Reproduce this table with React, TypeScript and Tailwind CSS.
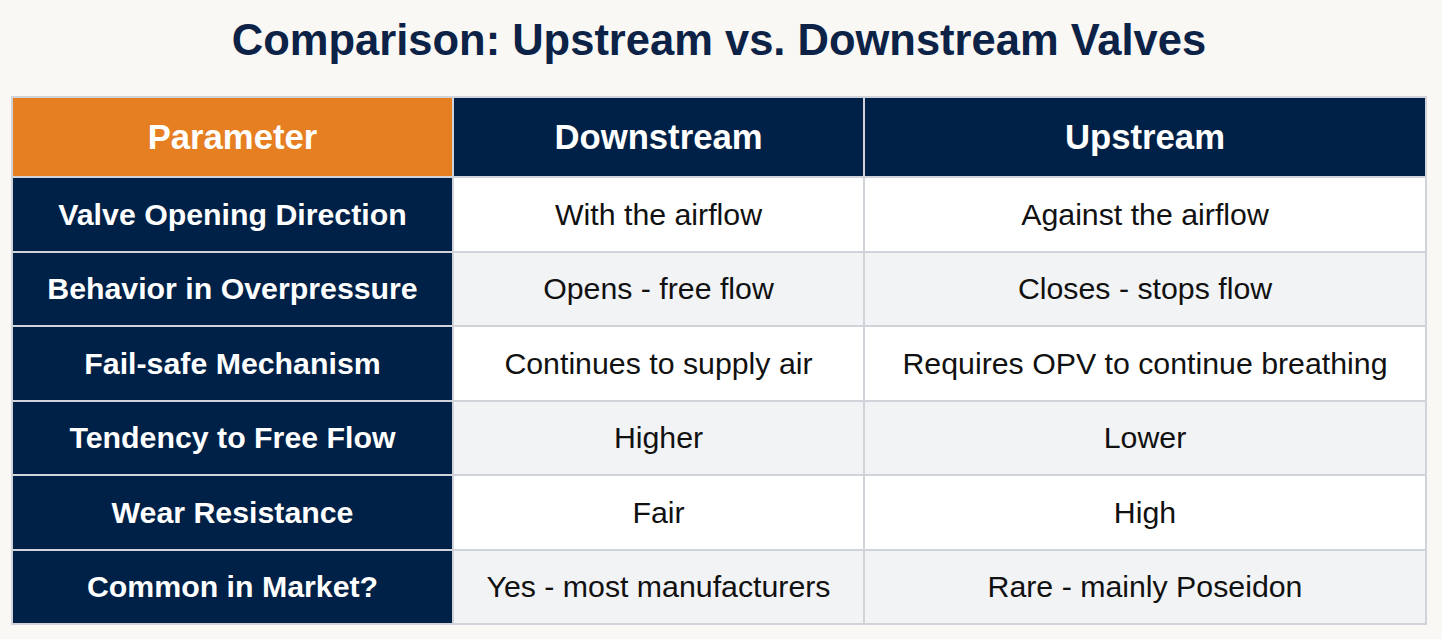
const rows = [
  ["Valve Opening Direction", "With the airflow", "Against the airflow"],
  ["Behavior in Overpressure", "Opens - free flow", "Closes - stops flow"],
  ["Fail-safe Mechanism", "Continues to supply air", "Requires OPV to continue breathing"],
  ["Tendency to Free Flow", "Higher", "Lower"],
  ["Wear Resistance", "Fair", "High"],
  ["Common in Market?", "Yes - most manufacturers", "Rare - mainly Poseidon"],
];

export default function App() {
  return (
    <div className="min-h-[639px] w-full bg-[#f9f8f5] pl-[11px] pr-[15px] pt-[14px] font-['Liberation_Sans',Arial,sans-serif]">
      <h1 className="text-center text-[43.5px] font-bold leading-[52px] text-[#0c2246]">
        Comparison: Upstream vs. Downstream Valves
      </h1>
      <table className="mt-[30px] w-full table-fixed border-collapse border-2 border-[#d0d3d9]">
        <colgroup>
          <col className="w-[441px]" />
          <col className="w-[411px]" />
          <col />
        </colgroup>
        <thead>
          <tr className="h-[80px]">
            <th className="border-2 border-[#d0d3d9] bg-[#e67e22] text-center text-[34.7px] font-bold text-white">
              Parameter
            </th>
            <th className="border-2 border-[#d0d3d9] bg-[#002147] text-center text-[34.7px] font-bold text-white">
              Downstream
            </th>
            <th className="border-2 border-[#d0d3d9] bg-[#002147] text-center text-[34.7px] font-bold text-white">
              Upstream
            </th>
          </tr>
        </thead>
        <tbody>
          {rows.map((r, i) => (
            <tr key={r[0]} className={`h-[74.5px] ${i % 2 === 1 ? "bg-[#f2f3f5]" : "bg-white"}`}>
              <td className="border-2 border-[#d0d3d9] bg-[#002147] text-center text-[30.3px] font-bold text-white">
                {r[0]}
              </td>
              <td className="border-2 border-[#d0d3d9] text-center text-[30.3px] text-[#111111]">{r[1]}</td>
              <td className="border-2 border-[#d0d3d9] text-center text-[30.3px] text-[#111111]">{r[2]}</td>
            </tr>
          ))}
        </tbody>
      </table>
    </div>
  );
}
